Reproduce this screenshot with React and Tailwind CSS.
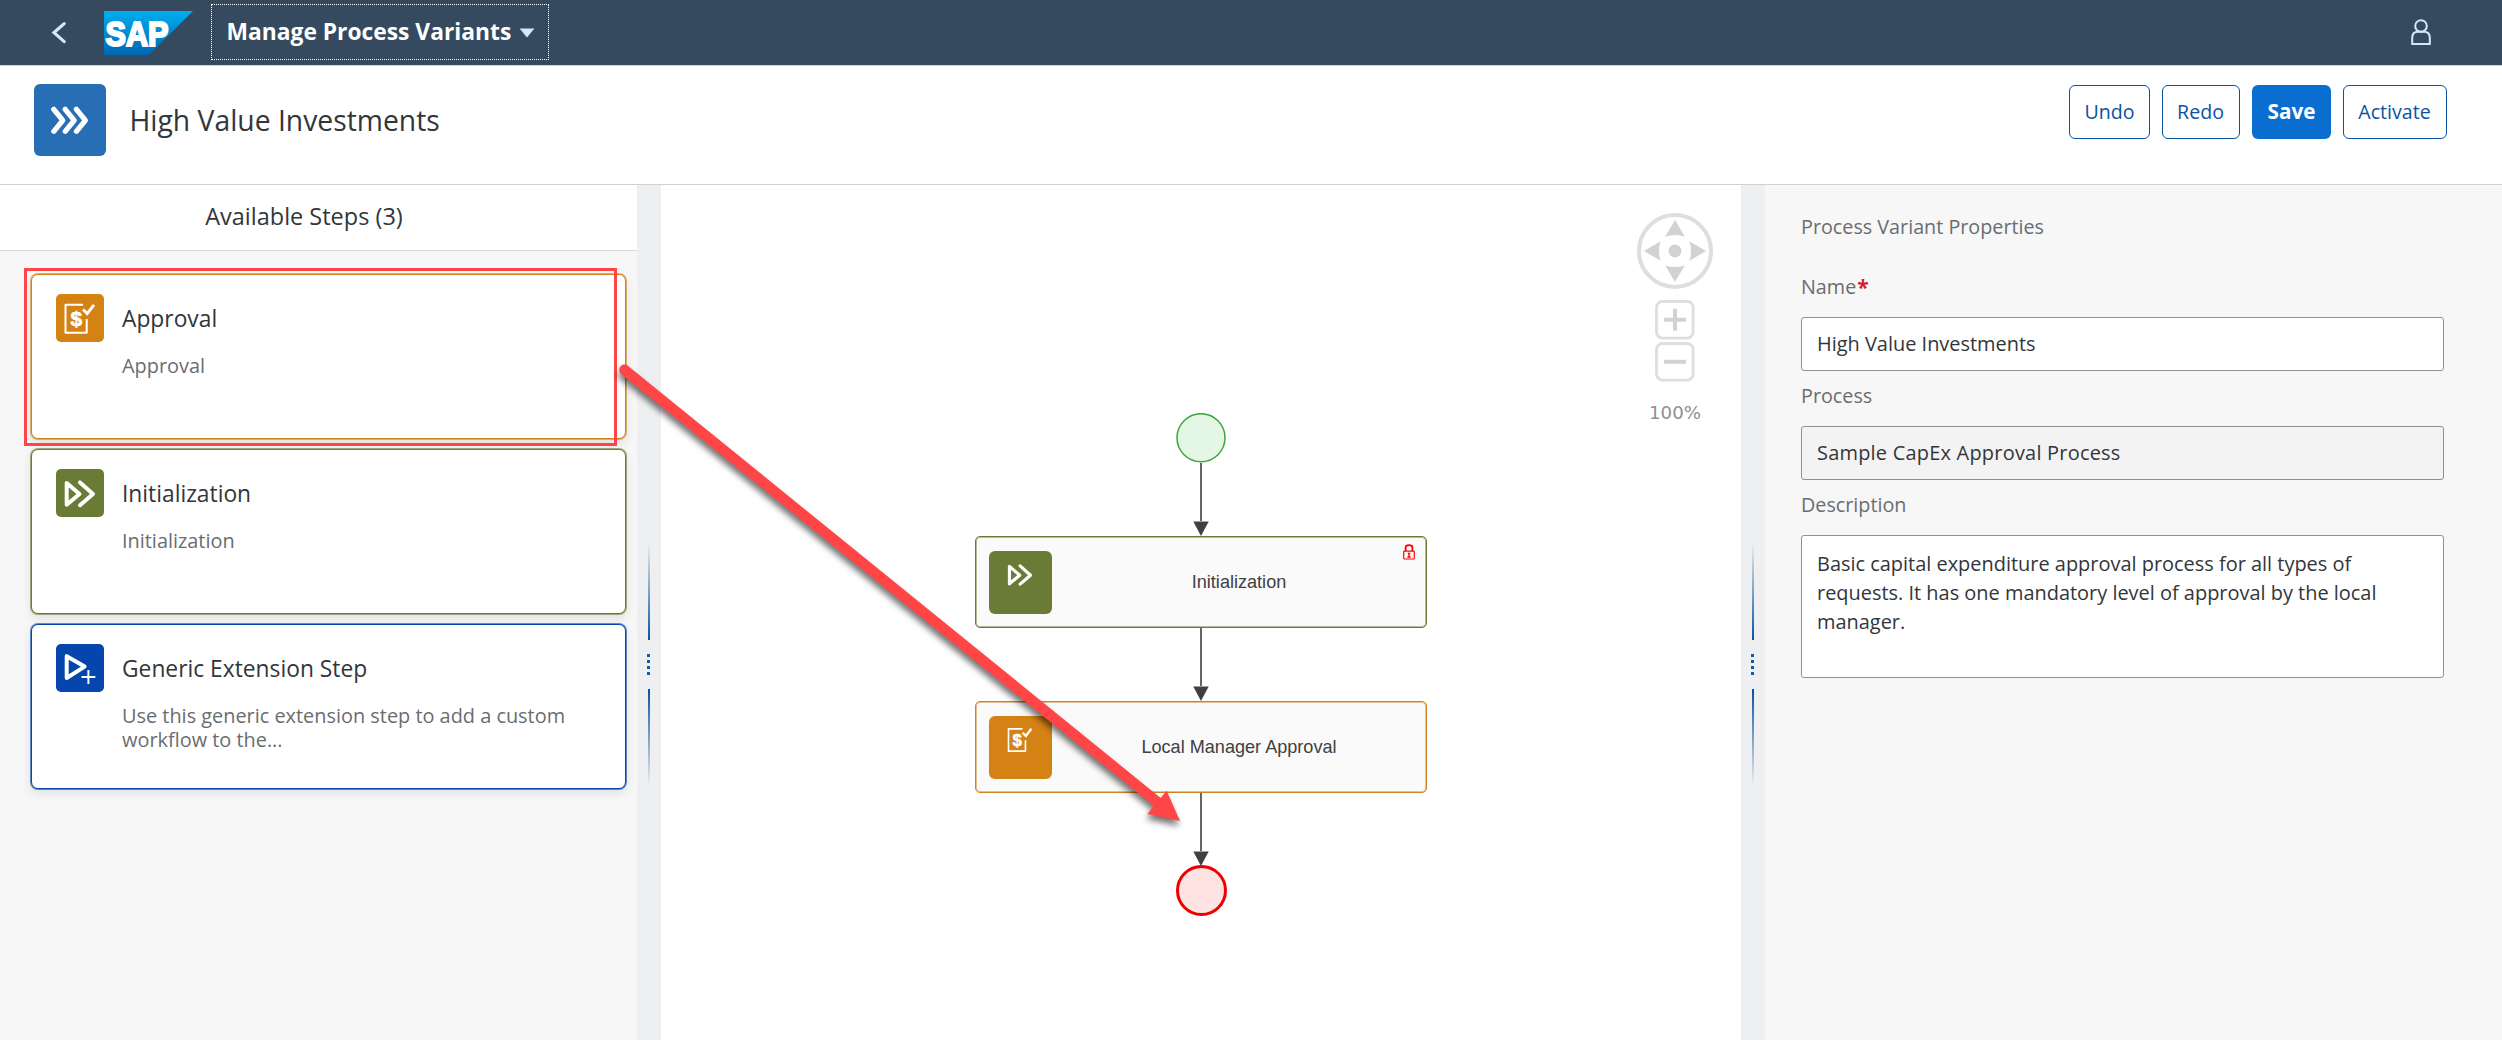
import React from "react";

function ApprovalGlyph() {
  return (
    <g>
      <path d="M27 10.8H9.5V38.7H30.7V25" fill="none" stroke="#fff" strokeWidth="2" strokeLinejoin="round" />
      <path d="M27 15.5L31.2 19.6L38 10.8" fill="none" stroke="#fff" strokeWidth="3" />
      <text x="20.4" y="31.8" textAnchor="middle" fill="#fff" stroke="#fff" strokeWidth="0.6" className="font-['Liberation_Sans',sans-serif] text-[21px] font-bold">$</text>
    </g>
  );
}

function InitGlyph() {
  return (
    <g fill="none" stroke="#fff" strokeWidth="4" strokeLinejoin="round" strokeLinecap="round">
      <path d="M10.7 14V35.8L23.5 25Z" />
      <path d="M24 13.4L37 25L24 36.2" />
    </g>
  );
}

function ExtensionGlyph() {
  return (
    <g fill="none" stroke="#fff">
      <path d="M10.7 12.2V34L28.6 22.6Z" strokeWidth="4" strokeLinejoin="round" />
      <path d="M32.4 26V40M25.5 33H39.3" strokeWidth="2" />
    </g>
  );
}

function StepCard({ title, text, card, tile, children }) {
  return (
    <div className={`flex h-[165px] w-[595px] gap-[18px] rounded-[7px] border bg-white pt-[19px] pl-6 ${card}`}>
      <div className={`size-12 shrink-0 rounded-[5px] ${tile}`}>
        <svg viewBox="0 0 48 48" className="size-12">{children}</svg>
      </div>
      <div className="w-[460px] pt-px">
        <div className="text-[22.8px] leading-[48px] text-[#32363a]">{title}</div>
        <div className="mt-[11px] text-[19.9px] leading-6 text-[#6a6d70]">{text}</div>
      </div>
    </div>
  );
}

function Splitter() {
  return (
    <div className="flex w-6 shrink-0 flex-col items-center bg-[#edeff0] pt-[358px]">
      <div className="h-[97px] w-0.5 bg-linear-to-t from-[#0854a0] to-[#0854a0]/0" />
      <div className="my-3.5 mr-px flex flex-col gap-[3px]">
        <i className="size-[3px] bg-[#0a5cb0]" />
        <i className="size-[3px] bg-[#0a5cb0]" />
        <i className="size-[3px] bg-[#0a5cb0]" />
        <i className="size-[3px] bg-[#0a5cb0]" />
      </div>
      <div className="h-[97px] w-0.5 bg-linear-to-b from-[#0854a0] to-[#0854a0]/0" />
    </div>
  );
}

function Connector({ className }) {
  return (
    <div className={`flex flex-col items-center ${className}`}>
      <div className="w-0.5 grow bg-[#666666]" />
      <svg viewBox="0 0 16 15" className="h-[15px] w-4">
        <path d="M0.3 0.5H15.7L8 15Z" fill="#404040" />
      </svg>
    </div>
  );
}

function FlowNode({ label, border, tile, locked, children }) {
  return (
    <div className={`relative flex h-[92px] w-[452px] items-center rounded-[5px] border bg-[#fafafa] pl-[13px] ${border}`}>
      <div className={`size-[63px] shrink-0 rounded-[6px] ${tile}`}>
        <svg viewBox="0 0 63 63" className="size-[63px]">
          <g transform="translate(11.9 4.2) scale(0.8)">{children}</g>
        </svg>
      </div>
      <div className="grow text-center font-['Liberation_Sans',Arial,sans-serif] text-[18.1px] leading-6 text-[#404040]">{label}</div>
      {locked && (
        <svg viewBox="0 0 12 16" className="absolute top-[7px] right-[11px] h-4 w-3" fill="none" stroke="#ff0000">
          <path d="M2.6 7V3.6Q2.6 1.2 6 1.2T9.4 3.6V7" strokeWidth="1.8" />
          <rect x="0.7" y="7.2" width="10.6" height="7.8" rx="0.8" strokeWidth="1.2" />
          <path d="M6 8.5V13.4M4.4 13H7.6M4.8 9.6H7.2" strokeWidth="1.3" />
        </svg>
      )}
    </div>
  );
}

function ZoomControls() {
  return (
    <div className="absolute top-7 right-[28px] flex w-[76px] flex-col items-center">
      <svg viewBox="0 0 76 76" className="size-[76px]">
        <circle cx="38" cy="38" r="36" fill="none" stroke="#dedede" strokeWidth="4" />
        <g fill="#d2d2d2">
          <circle cx="38" cy="38" r="6.4" />
          <path d="M38 7L47.8 23.5Q38 20.5 28.2 23.5Z" />
          <path d="M38 69L47.8 52.5Q38 55.5 28.2 52.5Z" />
          <path d="M7 38L23.5 47.8Q20.5 38 23.5 28.2Z" />
          <path d="M69 38L52.5 47.8Q55.5 38 52.5 28.2Z" />
        </g>
      </svg>
      <svg viewBox="0 0 40 40" className="mt-[11px] size-10">
        <rect x="1.5" y="1.5" width="36.6" height="36.6" rx="6" fill="none" stroke="#dedede" strokeWidth="2.8" />
        <path d="M9 19.8H31M20 8.8V30.8" stroke="#d2d2d2" strokeWidth="4" />
      </svg>
      <svg viewBox="0 0 40 40" className="mt-0.5 size-10">
        <rect x="1.5" y="1.5" width="36.6" height="36.6" rx="6" fill="none" stroke="#dedede" strokeWidth="2.8" />
        <path d="M9 19.8H31" stroke="#d2d2d2" strokeWidth="4" />
      </svg>
      <div className="mt-[19px] font-['DejaVu_Sans',sans-serif] text-[18.2px] leading-6 text-[#8f8f8f]">100%</div>
    </div>
  );
}

export default function App() {
  return (
    <div className="relative flex h-[1040px] w-[2502px] flex-col overflow-hidden bg-white font-['Open_Sans','Noto_Sans',sans-serif] text-[#32363a]">
      <header className="flex h-[66px] shrink-0 items-start border-b border-[#cfd4d8] bg-[#354a5f]">
        <svg viewBox="0 0 16 24" className="mt-[21px] ml-[51px] h-6 w-4">
          <path d="M13.2 2.6L3 11.6L13.2 20.6" fill="none" stroke="#d1e8ff" strokeWidth="3.2" strokeLinecap="round" />
        </svg>
        <svg viewBox="0 0 89 44" className="mt-[11px] ml-[37px] h-11 w-[89px]">
          <defs>
            <linearGradient id="logo" x1="0" y1="0" x2="0" y2="1">
              <stop offset="0" stopColor="#00aeef" />
              <stop offset="1" stopColor="#0066b3" />
            </linearGradient>
          </defs>
          <path d="M0 0H89L45 44H0Z" fill="url(#logo)" />
          <text x="1.5" y="35" textLength="63" lengthAdjust="spacingAndGlyphs" fill="#fff" stroke="#fff" strokeWidth="2.2" className="font-['Liberation_Sans',sans-serif] text-[35px] font-bold">SAP</text>
        </svg>
        <button className="mt-1 ml-[18px] flex h-14 w-[338px] items-center border border-dotted border-white pt-px pl-[14.5px] text-[22.8px] font-bold text-white">
          <span className="whitespace-nowrap">Manage Process Variants</span>
          <svg viewBox="0 0 16 10" className="ml-2 h-2.5 w-4">
            <path d="M0.6 0.4H15.4L8 9.6Z" fill="#d1e8ff" />
          </svg>
        </button>
        <svg viewBox="0 0 20 26" className="mt-[19px] mr-[71px] ml-auto h-[26px] w-5" fill="none" stroke="#d1e8ff" strokeWidth="2">
          <circle cx="10" cy="7" r="5.8" />
          <path d="M1.2 25V19Q1.2 12.8 7 12.8H13Q18.8 12.8 18.8 19V25Z" />
        </svg>
      </header>

      <section className="flex h-[119px] shrink-0 items-start border-b border-[#d0d1d2] pt-[18px] pr-[55px] pl-[34px]">
        <svg viewBox="0 0 72 72" className="size-[72px] rounded-[6px] bg-[#286eb4]">
          <path d="M19.8 25.3L28.8 36.3L19.8 47.3M31.2 25.3L40.2 36.3L31.2 47.3M42.4 25.3L51.4 36.3L42.4 47.3" fill="none" stroke="#fff" strokeWidth="5.2" strokeLinecap="round" strokeLinejoin="round" />
        </svg>
        <h1 className="ml-[23.5px] text-[28.3px] leading-[72px]">High Value Investments</h1>
        <div className="mt-px ml-auto flex gap-3 text-[19.6px] text-[#0854a0]">
          <button className="h-[54px] w-[81px] rounded-[6px] border border-[#0854a0] pb-px">Undo</button>
          <button className="h-[54px] w-[78px] rounded-[6px] border border-[#0854a0] pr-px pb-px">Redo</button>
          <button className="h-[54px] w-[79px] rounded-[6px] bg-[#0a6ed1] pb-px text-[20.7px] font-bold text-white">Save</button>
          <button className="h-[54px] w-[104px] rounded-[6px] border border-[#0854a0] pr-px pb-px">Activate</button>
        </div>
      </section>

      <main className="flex grow">
        <aside className="w-[637px] shrink-0 bg-[#f7f7f7]">
          <div className="flex h-[66px] items-center justify-center border-b border-[#d9d9d9] bg-white pr-[29px] pb-px text-[23.5px]">
            Available Steps (3)
          </div>
          <div className="flex flex-col gap-2.5 pt-[23px] pl-[31px]">
            <StepCard title="Approval" text="Approval" card="border-[#d58215] shadow-[0_0_0_1px_#d5821599,0_4px_10px_1px_#00000016]" tile="bg-[#d58215]">
              <ApprovalGlyph />
            </StepCard>
            <StepCard title="Initialization" text="Initialization" card="border-[#6a7b36] shadow-[0_0_0_1px_#6a7b3699,0_4px_10px_1px_#00000016]" tile="bg-[#6a7b36]">
              <InitGlyph />
            </StepCard>
            <StepCard title="Generic Extension Step" text="Use this generic extension step to add a custom workflow to the..." card="border-[#0645ad] shadow-[0_0_0_1px_#0645ad99,0_4px_10px_1px_#00000016]" tile="bg-[#0645ad]">
              <ExtensionGlyph />
            </StepCard>
          </div>
        </aside>

        <Splitter />

        <div className="relative flex w-[1080px] shrink-0 flex-col items-center pt-[228px]">
          <svg viewBox="0 0 50 50" className="size-[50px]">
            <circle cx="25" cy="24.7" r="24" fill="#e4f6e4" stroke="#3fa544" strokeWidth="1.5" />
          </svg>
          <Connector className="h-[73px]" />
          <FlowNode label="Initialization" border="border-[#6a7b36] shadow-[inset_0_0_0_1px_#6a7b3680]" tile="bg-[#6a7b36]" locked>
            <InitGlyph />
          </FlowNode>
          <Connector className="h-[73px]" />
          <FlowNode label="Local Manager Approval" border="border-[#cf8420] shadow-[inset_0_0_0_1px_#cf842080]" tile="bg-[#d58215]">
            <ApprovalGlyph />
          </FlowNode>
          <Connector className="h-[73px]" />
          <div className="-mt-px size-[51px] rounded-full border-[3px] border-[#ee0000] bg-[#ffe3e3]" />
          <ZoomControls />
        </div>

        <Splitter />

        <aside className="flex grow flex-col bg-[#f7f7f7] pt-[30px] pr-[58px] pl-9 text-[19.95px] leading-6">
          <div className="text-[19.75px] text-[#6a6d70]">Process Variant Properties</div>
          <label className="mt-9 flex text-[19.75px] text-[#6a6d70]">
            Name<span className="ml-px text-[21px] font-bold text-[#d5202f]">*</span>
          </label>
          <div className="mt-[18px] flex h-[54px] items-center rounded-[3px] border border-[#89919a] bg-white pb-px pl-[15px]">High Value Investments</div>
          <label className="mt-[13px] text-[19.75px] text-[#6a6d70]">Process</label>
          <div className="mt-[18px] flex h-[54px] items-center rounded-[3px] border border-[#89919a] bg-[#f3f3f3] pb-px pl-[15px] tracking-[0.23px]">Sample CapEx Approval Process</div>
          <label className="mt-[13px] text-[19.75px] text-[#6a6d70]">Description</label>
          <div className="mt-[18px] h-[143px] rounded-[3px] border border-[#89919a] bg-white pt-[13px] pr-10 pl-[15px] leading-[29px]">
            Basic capital expenditure approval process for all types of requests. It has one mandatory level of approval by the local manager.
          </div>
        </aside>
      </main>

      <div className="absolute top-[268px] left-6 h-[178px] w-[593px] border-3 border-[#ff4545]" />
      <svg viewBox="600 350 620 500" className="absolute top-[350px] left-[600px] h-[500px] w-[620px]">
        <g className="drop-shadow-[-1px_5px_3px_rgba(0,0,0,0.55)]" fill="#ff4545">
          <path d="M624.5 369.8L1158 802.5" stroke="#ff4545" strokeWidth="10.5" strokeLinecap="round" />
          <path d="M1180 821L1166.7 790.7L1147.3 814Z" />
        </g>
      </svg>
    </div>
  );
}
